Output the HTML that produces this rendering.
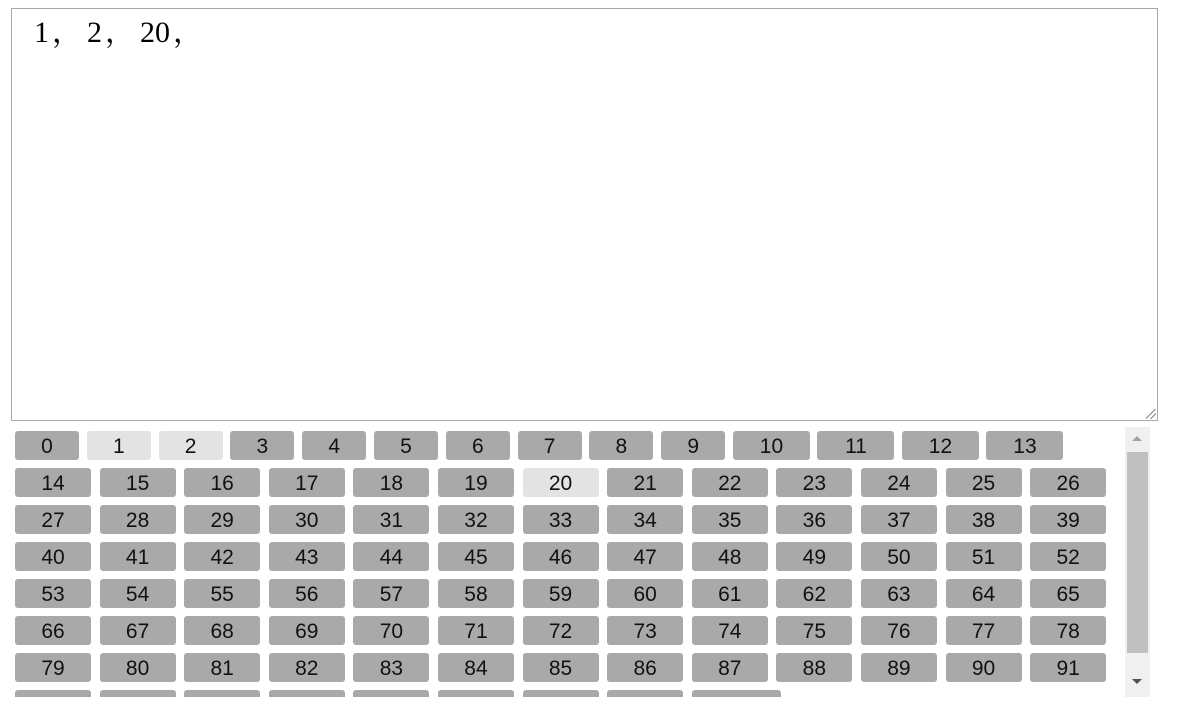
<!DOCTYPE html>
<html><head><meta charset="utf-8"><style>
body{margin:0;width:1178px;height:704px;background:#fff;position:relative;overflow:hidden;font-family:"Segoe UI","Liberation Sans","DejaVu Sans",sans-serif}
.ta{position:absolute;left:11px;top:8px;width:1145px;height:411px;border:1px solid #a9a9a9;}
.ta span{position:absolute;left:22px;top:-2px;font:30px "Liberation Serif","Noto Serif CJK SC",serif;color:#000;letter-spacing:0;white-space:pre}
.ta i{font-style:normal;font-family:"Noto Serif CJK SC",serif;display:inline-block;width:35px;padding-left:3px}
.grip{position:absolute;right:1px;bottom:1px;width:10px;height:10px;background:linear-gradient(135deg,transparent 45%,#888 45%,#888 52%,transparent 52%,transparent 70%,#888 70%,#888 77%,transparent 77%)}
.box{position:absolute;left:11px;top:427px;width:1139px;height:270px;overflow:hidden}
.row{position:absolute;left:4px;display:flex;height:29px}
.row b{font-weight:normal;display:block;height:29px;line-height:31px;text-align:center;background:#a9a9a9;border-radius:3px;font-size:21px;color:#111;width:76px;margin-right:8.6px}
.r1 b{width:64px;margin-right:7.8px}
.r1 b.w{width:77px;margin-right:7.5px}
b.l{background:#e3e3e3 !important}
.sb{position:absolute;left:1125px;top:427px;width:25px;height:270px;background:#f0f0f0}
.th{position:absolute;left:2px;top:25px;width:21px;height:201px;background:#c0c0c0}
.up{position:absolute;left:7px;top:9px;border-left:5px solid transparent;border-right:5px solid transparent;border-bottom:5px solid #a3a3a3}
.dn{position:absolute;left:7px;top:252px;border-left:5px solid transparent;border-right:5px solid transparent;border-top:5px solid #505050}
</style></head><body>
<div class="ta"><span>1<i>，</i>2<i>，</i>20<i>，</i></span><div class="grip"></div></div>
<div class="box">
<div class="row r1" style="top:4px"><b>0</b><b class="l">1</b><b class="l">2</b><b>3</b><b>4</b><b>5</b><b>6</b><b>7</b><b>8</b><b>9</b><b class="w">10</b><b class="w">11</b><b class="w">12</b><b class="w">13</b></div>
<div class="row" style="top:41px"><b>14</b><b>15</b><b>16</b><b>17</b><b>18</b><b>19</b><b class="l">20</b><b>21</b><b>22</b><b>23</b><b>24</b><b>25</b><b>26</b></div>
<div class="row" style="top:78px"><b>27</b><b>28</b><b>29</b><b>30</b><b>31</b><b>32</b><b>33</b><b>34</b><b>35</b><b>36</b><b>37</b><b>38</b><b>39</b></div>
<div class="row" style="top:115px"><b>40</b><b>41</b><b>42</b><b>43</b><b>44</b><b>45</b><b>46</b><b>47</b><b>48</b><b>49</b><b>50</b><b>51</b><b>52</b></div>
<div class="row" style="top:152px"><b>53</b><b>54</b><b>55</b><b>56</b><b>57</b><b>58</b><b>59</b><b>60</b><b>61</b><b>62</b><b>63</b><b>64</b><b>65</b></div>
<div class="row" style="top:189px"><b>66</b><b>67</b><b>68</b><b>69</b><b>70</b><b>71</b><b>72</b><b>73</b><b>74</b><b>75</b><b>76</b><b>77</b><b>78</b></div>
<div class="row" style="top:226px"><b>79</b><b>80</b><b>81</b><b>82</b><b>83</b><b>84</b><b>85</b><b>86</b><b>87</b><b>88</b><b>89</b><b>90</b><b>91</b></div>
<div class="row" style="top:263px"><b>92</b><b>93</b><b>94</b><b>95</b><b>96</b><b>97</b><b>98</b><b>99</b><b style="width:89px">100</b></div>
</div>
<div class="sb"><div class="up"></div><div class="th"></div><div class="dn"></div></div>
</body></html>
